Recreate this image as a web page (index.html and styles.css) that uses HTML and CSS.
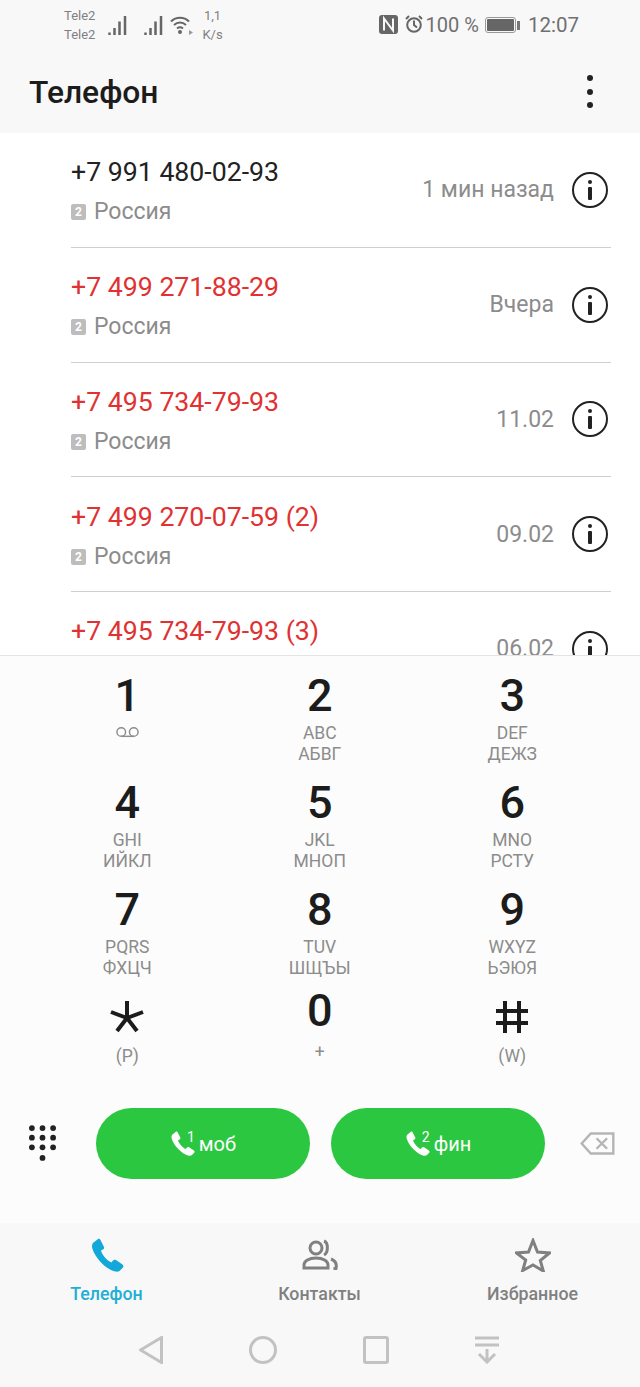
FILE: index.html
```html
<!DOCTYPE html>
<html lang="ru">
<head>
    <meta charset="UTF-8">
    <meta name="viewport" content="width=device-width, initial-scale=1.0">
    <title>Телефон</title>
    <link rel="stylesheet" href="styles.css">
</head>
<body>
    <div class="phone">
        <div class="status-bar">
            <div class="carriers"><span>Tele2</span><span>Tele2</span></div>
            <svg class="signal signal-first" viewBox="0 0 20 20"><path d="M1.500 20v-2.500M6.500 20v-7M11.500 20V6.500M17 20V1"/></svg>
            <svg class="signal signal-second" viewBox="0 0 20 20"><path d="M1.500 20v-2.500M6.500 20v-7M11.500 20V6.500M17 20V1"/></svg>
            <svg class="wifi" viewBox="0 0 23 20"><path d="M1 6.500c5-5 13-5 18 0M4 10c3.500-3.200 8.500-3.200 12 0M7 13.500c2-1.600 4-1.600 6 0"/><circle cx="10" cy="17" r="2"/><path class="wifi-arrow" d="M19 15l4 2.500-4 2.500z"/></svg>
            <div class="net-speed"><span>1,1</span><span>K/s</span></div>
            <div class="status-right">
                <svg class="nfc" viewBox="0 0 19 19"><rect width="19" height="19" rx="3"/><path d="M5 15.500V3.500l9 12V3.500"/></svg>
                <svg class="alarm" viewBox="0 0 18 18"><circle cx="9" cy="10" r="6.800"/><path d="M9 5.500V10l3 2.500M1 4l3-3M17 4l-3-3"/></svg>
                <span class="battery-text">100 %</span>
                <div class="battery"><div class="battery-fill"></div></div>
                <div class="battery-tip"></div>
                <span class="clock">12:07</span>
            </div>
        </div>

        <div class="app-bar">
            <h1>Телефон</h1>
            <div class="menu-dots"><i></i><i></i><i></i></div>
        </div>

        <div class="call-list">
            <div class="call-row">
                <div class="call-info">
                    <div class="call-number">+7 991 480-02-93</div>
                    <div class="call-region"><span class="sim-badge">2</span>Россия</div>
                </div>
                <div class="call-time">1 мин назад</div>
                <div class="info-btn"><i></i><b></b></div>
            </div>
            <div class="call-row">
                <div class="call-info">
                    <div class="call-number missed">+7 499 271-88-29</div>
                    <div class="call-region"><span class="sim-badge">2</span>Россия</div>
                </div>
                <div class="call-time">Вчера</div>
                <div class="info-btn"><i></i><b></b></div>
            </div>
            <div class="call-row">
                <div class="call-info">
                    <div class="call-number missed">+7 495 734-79-93</div>
                    <div class="call-region"><span class="sim-badge">2</span>Россия</div>
                </div>
                <div class="call-time">11.02</div>
                <div class="info-btn"><i></i><b></b></div>
            </div>
            <div class="call-row">
                <div class="call-info">
                    <div class="call-number missed">+7 499 270-07-59 (2)</div>
                    <div class="call-region"><span class="sim-badge">2</span>Россия</div>
                </div>
                <div class="call-time">09.02</div>
                <div class="info-btn"><i></i><b></b></div>
            </div>
            <div class="call-row">
                <div class="call-info">
                    <div class="call-number missed">+7 495 734-79-93 (3)</div>
                    <div class="call-region"><span class="sim-badge">2</span>Россия</div>
                </div>
                <div class="call-time">06.02</div>
                <div class="info-btn"><i></i><b></b></div>
            </div>
        </div>

        <div class="dialer">
            <div class="keypad">
                <div class="key">
                    <div class="digit">1</div>
                    <svg class="voicemail" viewBox="0 0 26 12"><circle cx="6.500" cy="6" r="4.500"/><circle cx="19.500" cy="6" r="4.500"/><path d="M6.500 10.500h13"/></svg>
                </div>
                <div class="key"><div class="digit">2</div><div class="letters">ABC<br>АБВГ</div></div>
                <div class="key"><div class="digit">3</div><div class="letters">DEF<br>ДЕЖЗ</div></div>
                <div class="key"><div class="digit">4</div><div class="letters">GHI<br>ИЙКЛ</div></div>
                <div class="key"><div class="digit">5</div><div class="letters">JKL<br>МНОП</div></div>
                <div class="key"><div class="digit">6</div><div class="letters">MNO<br>РСТУ</div></div>
                <div class="key"><div class="digit">7</div><div class="letters">PQRS<br>ФХЦЧ</div></div>
                <div class="key"><div class="digit">8</div><div class="letters">TUV<br>ШЩЪЫ</div></div>
                <div class="key"><div class="digit">9</div><div class="letters">WXYZ<br>ЬЭЮЯ</div></div>
                <div class="key">
                    <svg class="symbol" viewBox="0 0 36 32"><path d="M18 0v17M2 11l16 6M34 11l-16 6M8 30l10-13M28 30L18 17"/></svg>
                    <div class="letters">(P)</div>
                </div>
                <div class="key key-zero"><div class="digit">0</div><div class="letters">+</div></div>
                <div class="key">
                    <svg class="symbol" viewBox="0 0 36 32"><path d="M11 0v32M25 0v32M2 10h32M2 22h32"/></svg>
                    <div class="letters">(W)</div>
                </div>
            </div>

            <div class="call-actions">
                <svg class="dial-toggle" viewBox="0 0 28 38"><circle cx="3" cy="3" r="3"/><circle cx="14" cy="3" r="3"/><circle cx="25" cy="3" r="3"/><circle cx="3" cy="13" r="3"/><circle cx="14" cy="13" r="3"/><circle cx="25" cy="13" r="3"/><circle cx="3" cy="23" r="3"/><circle cx="14" cy="23" r="3"/><circle cx="25" cy="23" r="3"/><circle cx="14" cy="34" r="3"/></svg>
                <div class="call-btn">
                    <svg class="call-icon" viewBox="0 0 34 34"><path d="M3 5L8 1C9 .5 10 1 10.500 2L14 9C14.500 10 14 11 13 11.500L11 12.500C12 17 17 22.500 21.500 24.500L23 22.500C23.700 21.600 25 21.500 26 22L32.500 26.500C33.500 27.300 33.700 28.500 33 29.500L29.500 33C28 34 25 34 21 32 13 28 5 19 2.500 11 1.700 8.500 2 6 3 5Z"/></svg>
                    <sup>1</sup><span>моб</span>
                </div>
                <div class="call-btn">
                    <svg class="call-icon" viewBox="0 0 34 34"><path d="M3 5L8 1C9 .5 10 1 10.500 2L14 9C14.500 10 14 11 13 11.500L11 12.500C12 17 17 22.500 21.500 24.500L23 22.500C23.700 21.600 25 21.500 26 22L32.500 26.500C33.500 27.300 33.700 28.500 33 29.500L29.500 33C28 34 25 34 21 32 13 28 5 19 2.500 11 1.700 8.500 2 6 3 5Z"/></svg>
                    <sup>2</sup><span>фин</span>
                </div>
                <svg class="backspace" viewBox="0 0 36 24"><path d="M11 1.500h23.500v21H11L1.500 12z"/><path d="M17 6.500l11 11M28 6.500l-11 11"/></svg>
            </div>
        </div>

        <div class="bottom-area">
            <div class="tabs">
                <div class="tab active">
                    <svg class="tab-icon" viewBox="0 0 34 34"><path d="M3 5L8 1C9 .5 10 1 10.500 2L14 9C14.500 10 14 11 13 11.500L11 12.500C12 17 17 22.500 21.500 24.500L23 22.500C23.700 21.600 25 21.500 26 22L32.500 26.500C33.500 27.300 33.700 28.500 33 29.500L29.500 33C28 34 25 34 21 32 13 28 5 19 2.500 11 1.700 8.500 2 6 3 5Z"/></svg>
                    <span>Телефон</span>
                </div>
                <div class="tab">
                    <svg class="tab-icon tab-line" viewBox="0 0 36 34"><circle cx="14" cy="10" r="6"/><path d="M2 30v-3c0-4 5-7 12-7s12 3 12 7v3z"/><path d="M22 3c4.500 1.500 4.500 12 0 14M29 21c4 1.500 6 5 5 9.500h-2.500"/></svg>
                    <span>Контакты</span>
                </div>
                <div class="tab">
                    <svg class="tab-icon tab-line" viewBox="0 0 36 34"><path d="M18 2.500l4.500 11.500 12 1-9.200 7.500 3 10.500L18 27l-10.300 5.500 3-10.500L1.500 15l12-1z"/></svg>
                    <span>Избранное</span>
                </div>
            </div>
            <div class="nav-bar">
                <svg class="nav-back" viewBox="0 0 24 28"><path d="M22.500 1.500v25L1.500 14z"/></svg>
                <svg class="nav-home" viewBox="0 0 28 28"><circle cx="14" cy="14" r="12.500"/></svg>
                <svg class="nav-recent" viewBox="0 0 26 28"><rect x="1.500" y="1.500" width="23" height="25" rx="1.500"/></svg>
                <svg class="nav-down" viewBox="0 0 24 28"><path d="M0 2h24M0 9h24M12 26V13M4 18l8 8 8-8"/></svg>
            </div>
        </div>
    </div>
</body>
</html>
```

FILE: styles.css
```css
html, body {
    margin: 0;
    padding: 0;
}
body {
    font-family: Roboto, "Liberation Sans", sans-serif;
    background-color: #fff;
    color: #1c1c1c;
}
.phone {
    width: 640px;
    height: 1387px;
    display: flex;
    flex-direction: column;
    overflow: hidden;
}

/* Status bar */
.status-bar {
    height: 50px;
    flex: none;
    display: flex;
    align-items: center;
    background-color: #f8f8f8;
    color: #808080;
    padding-left: 64px;
    padding-right: 61px;
}
.carriers, .net-speed {
    display: flex;
    flex-direction: column;
    align-items: center;
    font-size: 13px;
    line-height: 19px;
}
.signal {
    width: 20px;
    height: 20px;
    fill: none;
    stroke: #666;
    stroke-width: 2.500;
    margin-top: -1px;
}
.signal-first {
    margin-left: 13px;
}
.signal-second {
    margin-left: 16px;
}
.wifi {
    width: 23px;
    height: 20px;
    margin-left: 6px;
    margin-top: -1px;
    fill: #666;
}
.wifi path {
    fill: none;
    stroke: #666;
    stroke-width: 2;
}
.wifi .wifi-arrow {
    fill: #999;
    stroke: none;
}
.net-speed {
    margin-left: 9px;
}
.status-right {
    margin-left: auto;
    display: flex;
    align-items: center;
    font-size: 20.500px;
    color: #707070;
}
.nfc {
    width: 19px;
    height: 19px;
    margin-top: -2px;
    fill: #666;
}
.nfc path {
    fill: none;
    stroke: #f8f8f8;
    stroke-width: 2;
}
.alarm {
    width: 18px;
    height: 18px;
    margin-left: 7px;
    margin-top: -2px;
    fill: none;
    stroke: #666;
    stroke-width: 2;
}
.battery-text {
    margin-left: 3px;
    font-size: 20px;
}
.battery {
    width: 31px;
    height: 16px;
    margin-left: 6px;
    border: 1px solid #999;
    border-radius: 3px;
    padding: 1px;
    box-sizing: border-box;
}
.battery-fill {
    height: 100%;
    background-color: #666;
    border-radius: 1px;
}
.battery-tip {
    width: 3px;
    height: 9px;
    margin-left: 1px;
    background-color: #777;
}
.clock {
    margin-left: 8px;
}

/* App bar */
.app-bar {
    height: 83px;
    flex: none;
    display: flex;
    align-items: center;
    justify-content: space-between;
    background-color: #f8f8f8;
    padding: 0 47px 0 29px;
    box-sizing: border-box;
}
h1 {
    margin: 1px 0 0;
    font-size: 31.800px;
    font-weight: 500;
    color: #1c1c1c;
}
.menu-dots {
    display: flex;
    flex-direction: column;
    gap: 7.500px;
    margin-bottom: 0;
}
.menu-dots i {
    width: 6px;
    height: 6px;
    border-radius: 50%;
    background-color: #222;
}

/* Call list */
.call-list {
    height: 522px;
    flex: none;
    overflow: hidden;
    background-color: #fff;
    padding-left: 71px;
    padding-right: 29px;
}
.call-row {
    height: 114.750px;
    box-sizing: border-box;
    display: flex;
    align-items: center;
    border-bottom: 1px solid #cfcfcf;
}
.call-info {
    flex: 1;
    margin-top: 4px;
}
.call-number {
    font-size: 26.700px;
    line-height: 30px;
    color: #222;
}
.call-number.missed {
    color: #e03232;
}
.call-region {
    display: flex;
    align-items: center;
    margin-top: 11px;
    font-size: 23px;
    line-height: 28px;
    color: #8c8c8c;
}
.sim-badge {
    width: 15px;
    height: 16px;
    margin-right: 8px;
    border-radius: 2px;
    background-color: #bdbdbd;
    color: #fff;
    font-size: 12px;
    font-weight: 700;
    line-height: 16px;
    text-align: center;
}
.call-time {
    font-size: 23px;
    color: #8c8c8c;
    margin-right: 18px;
}
.info-btn {
    width: 36px;
    height: 36px;
    margin-right: 3px;
    box-sizing: border-box;
    border: 2px solid #222;
    border-radius: 50%;
    display: flex;
    flex-direction: column;
    align-items: center;
    justify-content: center;
    gap: 3px;
}
.info-btn i {
    width: 4px;
    height: 4px;
    border-radius: 50%;
    background-color: #222;
}
.info-btn b {
    width: 3.500px;
    height: 13px;
    border-radius: 1px;
    background-color: #222;
}

/* Dialer */
.dialer {
    height: 568px;
    flex: none;
    box-sizing: border-box;
    border-top: 1px solid #e4e4e4;
    background-color: #fcfcfc;
}
.keypad {
    display: grid;
    grid-template-columns: repeat(3, 192.500px);
    grid-auto-rows: 107px;
    padding-left: 31px;
    padding-top: 15px;
}
.key {
    display: flex;
    flex-direction: column;
    align-items: center;
}
.digit {
    font-size: 45px;
    line-height: 50px;
    font-weight: 500;
    color: #1c1c1c;
}
.letters {
    font-size: 17.500px;
    line-height: 21px;
    color: #8c8c8c;
    text-align: center;
    margin-top: 2px;
}
.voicemail {
    width: 25px;
    height: 12px;
    margin-top: 5px;
    fill: none;
    stroke: #8c8c8c;
    stroke-width: 1.500;
}
.symbol {
    width: 36px;
    height: 32px;
    margin-top: 9px;
    fill: none;
    stroke: #1c1c1c;
    stroke-width: 4;
}
.symbol + .letters {
    margin-top: 13px;
}
.key-zero {
    margin-top: -6px;
}
.key-zero .letters {
    margin-top: 6px;
}

.call-actions {
    display: flex;
    align-items: center;
    margin-top: 9px;
    height: 71px;
    padding-left: 29px;
}
.dial-toggle {
    width: 27px;
    height: 37px;
    fill: #222;
    margin-right: 40px;
}
.call-btn {
    width: 214px;
    height: 71px;
    margin-right: 21px;
    border-radius: 36px;
    background-color: #2bc741;
    color: #fff;
    display: flex;
    align-items: center;
    justify-content: center;
    font-size: 20px;
}
.call-icon {
    width: 25px;
    height: 25px;
    fill: #fff;
    margin-right: -8px;
}
.call-btn sup {
    font-size: 14px;
    line-height: 1;
    align-self: center;
    margin-bottom: 14px;
    margin-right: 4px;
}
.backspace {
    width: 35px;
    height: 23px;
    margin-left: 14px;
    fill: none;
    stroke: #b5b5b5;
    stroke-width: 2.500;
}

/* Bottom tabs and navigation */
.bottom-area {
    flex: 1;
    background-color: #f8f8f8;
}
.tabs {
    display: grid;
    grid-template-columns: repeat(3, 213px);
    padding-top: 15px;
}
.tab {
    display: flex;
    flex-direction: column;
    align-items: center;
    font-size: 17.800px;
    line-height: 21px;
    font-weight: 500;
    color: #808080;
}
.tab span {
    margin-top: 11px;
}
.tab.active {
    color: #22afd6;
}
.tab-icon {
    width: 36px;
    height: 34px;
    fill: #12a9d8;
}
.tab-line {
    fill: none;
    stroke: #808080;
    stroke-width: 3;
}
.nav-bar {
    display: flex;
    align-items: center;
    padding-top: 32px;
    padding-left: 139px;
    gap: 86px;
}
.nav-bar svg {
    height: 28px;
    fill: none;
    stroke: #c2c2c2;
    stroke-width: 3;
}
.nav-back, .nav-down {
    width: 24px;
}
.nav-home {
    width: 28px;
}
.nav-recent {
    width: 26px;
}
```
